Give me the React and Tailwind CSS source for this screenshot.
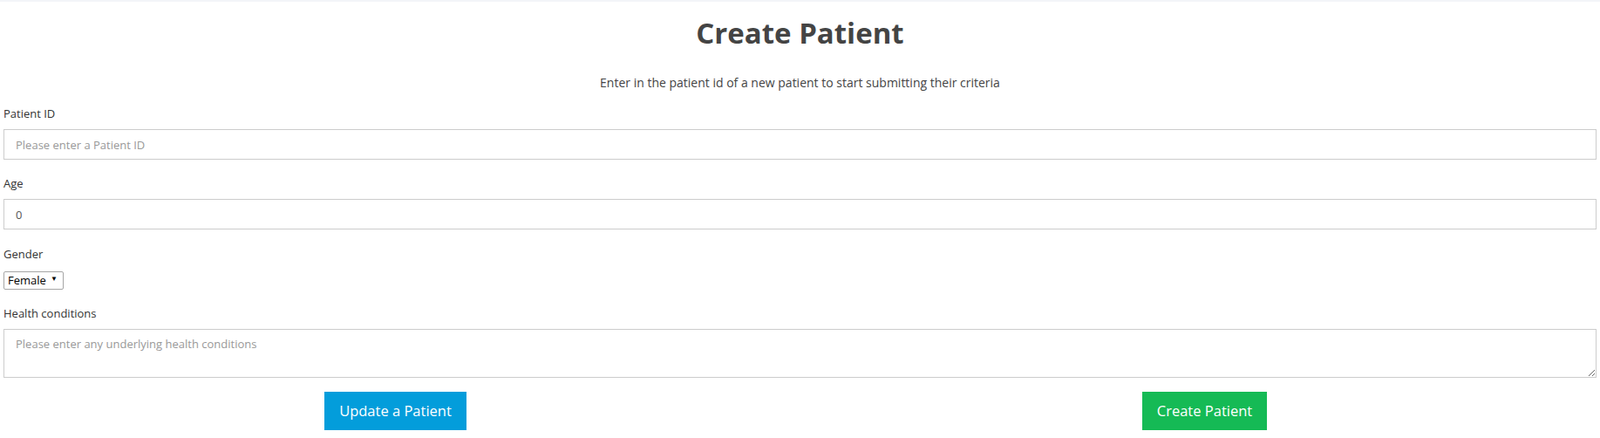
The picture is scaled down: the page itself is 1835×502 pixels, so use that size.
import React from "react";

export default function App() {
  return (
    <div className="w-full bg-white font-['Open_Sans',_'Noto_Sans',_Arial,_sans-serif] text-[#333]">
      <div className="h-[2px] bg-[#f3f5f8]" />
      <h1 className="mt-[16px] text-center text-[33px] leading-[40px] font-bold text-[#444]">
        Create Patient
      </h1>
      <p className="mt-[27px] text-center text-[14px] leading-[20px] text-[#444]">
        Enter in the patient id of a new patient to start submitting their criteria
      </p>
      <form className="px-1">
        <label className="mt-[15px] block text-[13px] leading-[20px] text-[#333]">Patient ID</label>
        <input
          className="mt-[8px] block h-[35px] w-full border border-[#cccccc] px-[13px] text-[13px] text-[#555] placeholder:text-[#999] outline-none"
          placeholder="Please enter a Patient ID"
        />
        <label className="mt-[17px] block text-[13px] leading-[20px] text-[#333]">Age</label>
        <input
          className="mt-[8px] block h-[35px] w-full border border-[#cccccc] px-[13px] text-[13px] text-[#555] outline-none"
          defaultValue="0"
        />
        <label className="mt-[18px] block text-[13px] leading-[20px] text-[#333]">Gender</label>
        <div className="relative mt-[7px] h-[21px] w-[69px]">
          <select className="h-[21px] w-[69px] appearance-none rounded-[2px] border border-[#a6a6a6] bg-white pl-[4px] text-[13px] leading-[19px] text-black outline-none">
            <option>Female</option>
            <option>Male</option>
          </select>
          <span className="pointer-events-none absolute right-[7px] top-[6px] text-[8px] leading-[10px] text-black">▼</span>
        </div>
        <label className="mt-[20px] block text-[13px] leading-[20px] text-[#333]">Health conditions</label>
        <textarea
          className="mt-[8px] block h-[56px] w-full border border-[#cccccc] px-[13px] py-[7px] text-[13px] text-[#555] placeholder:text-[#999] outline-none"
          placeholder="Please enter any underlying health conditions"
        />
        <div className="mt-[16px] grid grid-cols-[907px_907px] gap-[21px] -mx-1">
          <div className="flex justify-center">
            <button type="button" className="h-[44px] bg-[#039ddb] px-[17px] text-[16.5px] text-white">
              Update a Patient
            </button>
          </div>
          <div className="flex justify-center">
            <button type="button" className="h-[44px] bg-[#15ba55] px-[17px] text-[16.5px] text-white">
              Create Patient
            </button>
          </div>
        </div>
      </form>
    </div>
  );
}
